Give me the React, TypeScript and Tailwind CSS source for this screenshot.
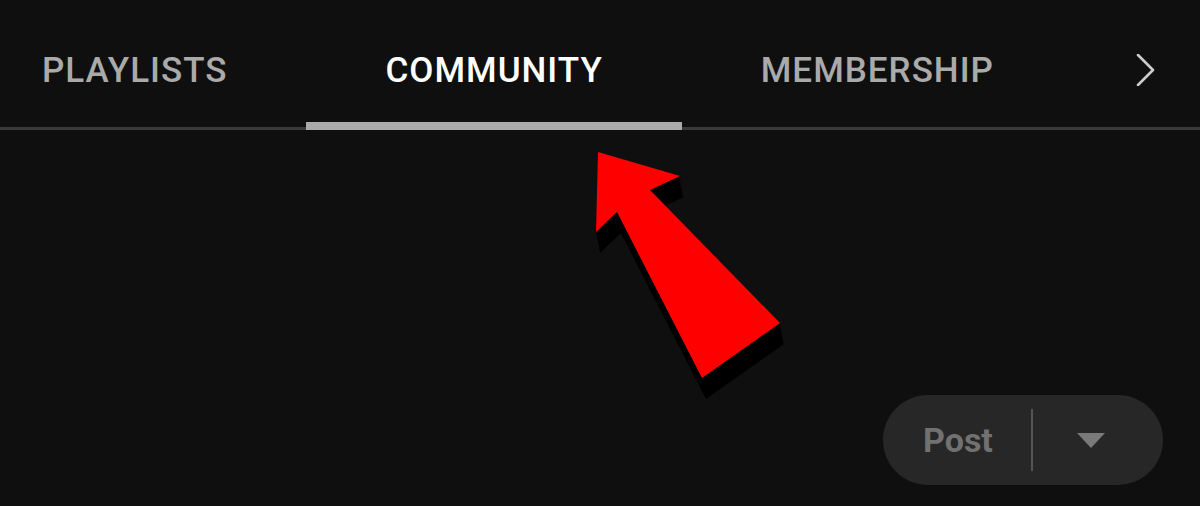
import React from "react";

const tabs = [
  { label: "PLAYLISTS", active: false },
  { label: "COMMUNITY", active: true },
  { label: "MEMBERSHIP", active: false },
];

// arrow drawn over the page, coordinates in page pixels
const arrowPoints =
  "598,152 680,176 650,190 780,323 702,378 617,212 596,232";

function Arrow() {
  const steps = Array.from({ length: 12 }, (_, i) => i + 1);
  return (
    <svg
      className="pointer-events-none absolute left-0 top-0"
      width="1200"
      height="506"
      viewBox="0 0 1200 506"
    >
      {steps.map((i) => (
        <polygon
          key={i}
          points={arrowPoints}
          fill="#000"
          transform={`translate(${(i * 4) / 12} ${(i * 21) / 12})`}
        />
      ))}
      <polygon points={arrowPoints} fill="#ff0000" />
    </svg>
  );
}

export default function App() {
  return (
    <main
      className="relative h-[506px] w-[1200px] overflow-hidden bg-[#0f0f0f]"
      style={{ fontFamily: "Roboto, 'Noto Sans', sans-serif" }}
    >
      {/* Tab bar */}
      <div className="relative flex h-[130px] items-start border-b-[3px] border-[#3a3a3a]">
        <div className="ml-[-37px] flex h-full">
          {tabs.map((t) => (
            <div
              key={t.label}
              className={`relative h-full px-[79px] pt-[50px] text-[35px] font-medium leading-[41px] tracking-[1px] ${
                t.active ? "text-white" : "text-[#aaaaaa]"
              }`}
            >
              {t.label}
              {t.active && (
                <span className="absolute bottom-[-3px] left-0 right-0 h-[8px] bg-[#aaaaaa]" />
              )}
            </div>
          ))}
        </div>
        <div className="ml-auto mr-[44px] pt-[54px]">
          <svg width="20" height="32" viewBox="0 0 20 32" fill="none">
            <path
              d="M2 1 L17 16 L2 31"
              stroke="#cccccc"
              strokeWidth="2.6"
              strokeLinecap="round"
              strokeLinejoin="round"
            />
          </svg>
        </div>
      </div>

      {/* Content */}
      <div className="flex justify-end pr-[37px] pt-[265px]">
        <div className="flex h-[90px] w-[280px] items-center rounded-full bg-[#272727] pl-[40px]">
          <span className="text-[34px] font-bold leading-none text-[#717171]">
            Post
          </span>
          <span className="ml-auto h-[62px] w-[2px] bg-[#555555]" />
          <span className="mr-[58px] ml-[44px] h-0 w-0 border-x-[14px] border-t-[15px] border-x-transparent border-t-[#7a7a7a]" />
        </div>
      </div>

      <Arrow />
    </main>
  );
}
